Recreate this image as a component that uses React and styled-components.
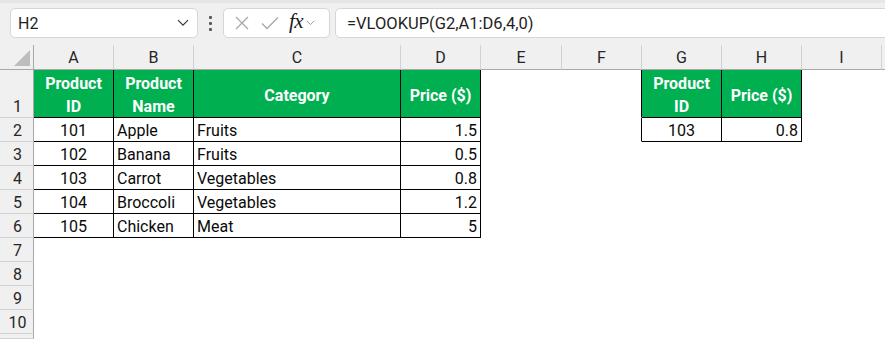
import React from "react";
import styled, { createGlobalStyle } from "styled-components";

const Global = createGlobalStyle`
  html, body { margin: 0; padding: 0; background: #ffffff; }
  body { font-family: Roboto, "Liberation Sans", sans-serif; overflow: hidden; }
  * { box-sizing: border-box; }
`;

const Page = styled.div`
  width: 885px;
  height: 339px;
  overflow: hidden;
  display: flex;
  flex-direction: column;
`;

const TopBar = styled.div`
  height: 45px;
  background: #f0f0f0;
  border-top: 3px solid #e6e6e6;
  display: flex;
  align-items: flex-start;
  padding: 5px 0 0 10px;
`;

const Box = styled.div`
  height: 30px;
  background: #ffffff;
  border: 1px solid #d6d6d6;
  border-radius: 5px;
  display: flex;
  align-items: center;
  flex: ${(p) => (p.$grow ? "1 0 auto" : "0 0 auto")};
  width: ${(p) => p.$w || "auto"};
  padding: 0 ${(p) => p.$pr || "8px"} 0 ${(p) => p.$pl || "7px"};
  margin-left: ${(p) => p.$ml || "0"};
  margin-right: ${(p) => (p.$grow ? "-20px" : "0")};
`;

const BoxText = styled.span`
  font-family: Roboto, "Liberation Sans", sans-serif;
  font-size: ${(p) => p.$size || "16px"};
  color: #1f1f1f;
  flex: 1;
  white-space: nowrap;
`;

const Dots = styled.div`
  width: 25px;
  height: 30px;
  display: flex;
  flex-direction: column;
  align-items: center;
  justify-content: center;
  gap: 3px;
`;

const Dot = styled.span`
  width: 3px;
  height: 3px;
  background: #5a5a5a;
  border-radius: 1px;
`;

const Fx = styled.span`
  font-family: "Liberation Serif", "DejaVu Serif", serif;
  font-style: italic;
  font-size: 21px;
  color: #1a1a1a;
  margin: 0 3px 3px 10px;
  letter-spacing: -0.5px;
`;

const Sheet = styled.div`
  display: grid;
  grid-template-columns: 34px 80px 80px 207px 80px 81px 80px 80px 80px 80px 1fr;
  grid-template-rows: 25px 48px repeat(9, 24px) 1fr;
  flex: 1;
`;

const ColHead = styled.div`
  background: #f0f0f0;
  border-bottom: 1px solid #a8a8a8;
  border-right: 1px solid #d2d2d2;
  display: flex;
  align-items: center;
  justify-content: center;
  font-size: 16px;
  color: #262626;
  padding-top: 1px;
`;

const Corner = styled.div`
  background: #f0f0f0;
  border-bottom: 1px solid #a8a8a8;
  border-right: 1px solid #a8a8a8;
  position: relative;
`;

const Tri = styled.div`
  position: absolute;
  right: 3px;
  bottom: 3px;
  width: 0;
  height: 0;
  border-left: 16px solid transparent;
  border-bottom: 16px solid #bdbdbd;
`;

const RowHead = styled.div`
  background: #f0f0f0;
  border-right: 1px solid #a8a8a8;
  border-bottom: 1px solid #d2d2d2;
  display: flex;
  align-items: flex-end;
  justify-content: center;
  font-size: 16px;
  color: #262626;
  padding-bottom: 1px;
  padding-left: 2px;
`;

const Cell = styled.div`
  border-right: 1px solid ${(p) => p.$r || "transparent"};
  border-bottom: 1px solid ${(p) => p.$b || "transparent"};
  background: ${(p) => (p.$head ? "#00b050" : "#ffffff")};
  color: ${(p) => (p.$head ? "#ffffff" : "#0a0a0a")};
  font-weight: ${(p) => (p.$head ? 700 : 400)};
  font-size: 16px;
  line-height: ${(p) => (p.$head ? "23px" : "19px")};
  display: flex;
  align-items: ${(p) => (p.$head ? "center" : "flex-end")};
  justify-content: ${(p) =>
    p.$align === "right" ? "flex-end" : p.$align === "left" ? "flex-start" : "center"};
  text-align: ${(p) => p.$align || "center"};
  padding: ${(p) => (p.$head ? "3px 3px 0 3px" : "0 3px 1px 3px")};
  white-space: pre-line;
  overflow: hidden;
`;

const XIcon = () => (
  <svg width="16" height="16" viewBox="0 0 16 16" style={{ marginLeft: 2 }}>
    <path d="M2 2 L14 14 M14 2 L2 14" stroke="#a8a8a8" strokeWidth="1.3" fill="none" />
  </svg>
);

const CheckIcon = () => (
  <svg width="18" height="16" viewBox="0 0 18 16" style={{ marginLeft: 11 }}>
    <path d="M1 8.5 L6 13.5 L17 2.5" stroke="#a8a8a8" strokeWidth="1.3" fill="none" />
  </svg>
);

const Chevron = ({ size = 12, color = "#3a3a3a" }) => (
  <svg width={size} height={size * 0.6} viewBox="0 0 12 7">
    <path d="M1 1 L6 6 L11 1" stroke={color} strokeWidth="1.3" fill="none" />
  </svg>
);

const cols = ["A", "B", "C", "D", "E", "F", "G", "H", "I", ""];
const aligns = ["center", "left", "left", "right"];
const headers = ["Product\nID", "Product\nName", "Category", "Price ($)"];
const data = [
  ["101", "Apple", "Fruits", "1.5"],
  ["102", "Banana", "Fruits", "0.5"],
  ["103", "Carrot", "Vegetables", "0.8"],
  ["104", "Broccoli", "Vegetables", "1.2"],
  ["105", "Chicken", "Meat", "5"],
];
const K = "#000000";

function renderRow(r) {
  const cells = [];
  for (let c = 0; c < 10; c++) {
    let props = {};
    let content = "";
    if (c < 4 && r <= 6) {
      props = { $r: K, $b: K, $align: r === 1 ? "center" : aligns[c], $head: r === 1 };
      content = r === 1 ? headers[c] : data[r - 2][c];
    } else if (c === 5 && r <= 2) {
      props = { $r: K };
    } else if ((c === 6 || c === 7) && r <= 2) {
      props = { $r: K, $b: K, $head: r === 1, $align: r === 1 ? "center" : c === 6 ? "center" : "right" };
      content = r === 1 ? (c === 6 ? "Product\nID" : "Price ($)") : c === 6 ? "103" : "0.8";
    }
    cells.push(
      <Cell key={`${r}-${c}`} {...props}>
        {content}
      </Cell>
    );
  }
  return cells;
}

export default function App() {
  const rows = [];
  for (let r = 1; r <= 11; r++) {
    rows.push(<RowHead key={`rh${r}`}>{r <= 10 ? r : ""}</RowHead>);
    rows.push(...renderRow(r));
  }
  return (
    <Page>
      <Global />
      <TopBar>
        <Box $w="188px">
          <BoxText>H2</BoxText>
          <Chevron size={12} />
        </Box>
        <Dots>
          <Dot />
          <Dot />
          <Dot />
        </Dots>
        <Box $w="107px" $pl="8px" $pr="3px">
          <XIcon />
          <CheckIcon />
          <Fx>fx</Fx>
          <Chevron size={9} color="#9a9a9a" />
        </Box>
        <Box $grow $pl="11px" $ml="5px">
          <BoxText $size="16.5px">=VLOOKUP(G2,A1:D6,4,0)</BoxText>
        </Box>
      </TopBar>
      <Sheet>
        <Corner>
          <Tri />
        </Corner>
        {cols.map((c, i) => (
          <ColHead key={i}>{c}</ColHead>
        ))}
        {rows}
      </Sheet>
    </Page>
  );
}
